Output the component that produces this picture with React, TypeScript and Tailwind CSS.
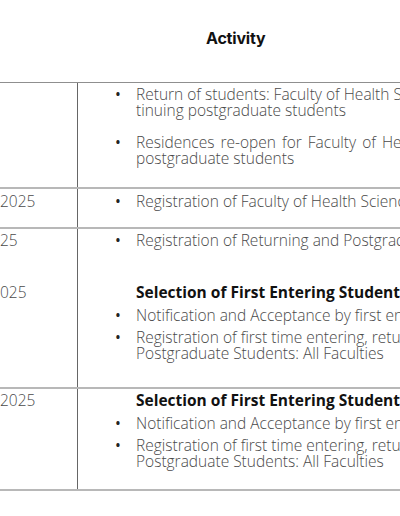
import React from 'react';

const body = "font-['Open_Sans',sans-serif] text-[15.5px] leading-[16px] font-light text-[#4a4a4a]";

const Bullet: React.FC<{ lines: React.ReactNode[]; className?: string }> = ({ lines, className = '' }) => (
  <div className={`flex pl-[37px] ${className}`}>
    <span className="w-[21px] shrink-0 font-normal text-[#222]">•</span>
    <div className="whitespace-nowrap">
      {lines.map((l, i) => (
        <div key={i}>{l}</div>
      ))}
    </div>
  </div>
);

const Heading: React.FC<{ text: string }> = ({ text }) => (
  <div className="pl-[58px] whitespace-nowrap font-bold text-[#111]">{text}</div>
);

export default function App() {
  return (
    <div className={`w-[400px] h-[516px] bg-white overflow-hidden ${body}`}>
      {/* header */}
      <div className="h-[83px] border-b border-[#8f8f8f] flex">
        <div className="w-[79px] shrink-0" />
        <div className="pl-[127px] pt-[28px] font-['Inter',sans-serif] font-bold text-[16px] leading-[20px] text-[#111] tracking-[-0.2px]">
          Activity
        </div>
      </div>

      {/* row 1 */}
      <div className="flex border-b-2 border-[#b8b8b8]">
        <div className="w-[78px] shrink-0 border-r border-[#666]" />
        <div className="flex-1 min-w-0 overflow-hidden pt-[3px] pb-[21px]">
          <Bullet lines={['Return of students: Faculty of Health Sciences and con-', 'tinuing postgraduate students']} />
          <Bullet
            className="mt-[16px]"
            lines={[
              <span className="[word-spacing:2px]">Residences re-open for Faculty of Health Sciences and continuing</span>,
              'postgraduate students',
            ]}
          />
        </div>
      </div>

      {/* row 2 */}
      <div className="flex border-b-2 border-[#b8b8b8]">
        <div className="w-[78px] shrink-0 border-r border-[#666] pt-[4px] overflow-hidden">
          <div className="whitespace-nowrap text-right pr-[49px]">2025</div>
        </div>
        <div className="flex-1 min-w-0 overflow-hidden pt-[4px] pb-[18px]">
          <Bullet lines={['Registration of Faculty of Health Sciences students']} />
        </div>
      </div>

      {/* row 3 */}
      <div className="flex border-b-2 border-[#b8b8b8]">
        <div className="w-[78px] shrink-0 border-r border-[#666] pt-[3px] overflow-hidden">
          <div className="whitespace-nowrap text-right pr-[61px]">25</div>
          <div className="whitespace-nowrap text-right pr-[53px] mt-[36px]">025</div>
        </div>
        <div className="flex-1 min-w-0 overflow-hidden pt-[3px] pb-[26px]">
          <Bullet lines={['Registration of Returning and Postgraduate Students']} />
          <div className="mt-[36px]">
            <Heading text="Selection of First Entering Students" />
            <Bullet className="mt-[6.5px]" lines={['Notification and Acceptance by first entering students']} />
            <Bullet
              className="mt-[6.5px]"
              lines={['Registration of first time entering, returning and', 'Postgraduate Students: All Faculties']}
            />
          </div>
        </div>
      </div>

      {/* row 4 */}
      <div className="flex border-b-2 border-[#b8b8b8]">
        <div className="w-[78px] shrink-0 border-r border-[#666] pt-[3px] overflow-hidden">
          <div className="whitespace-nowrap text-right pr-[49px]">2025</div>
        </div>
        <div className="flex-1 min-w-0 overflow-hidden pt-[3px] pb-[20px]">
          <Heading text="Selection of First Entering Students" />
          <Bullet className="mt-[6.5px]" lines={['Notification and Acceptance by first entering students']} />
          <Bullet
            className="mt-[6.5px]"
            lines={['Registration of first time entering, returning and', 'Postgraduate Students: All Faculties']}
          />
        </div>
      </div>
    </div>
  );
}
